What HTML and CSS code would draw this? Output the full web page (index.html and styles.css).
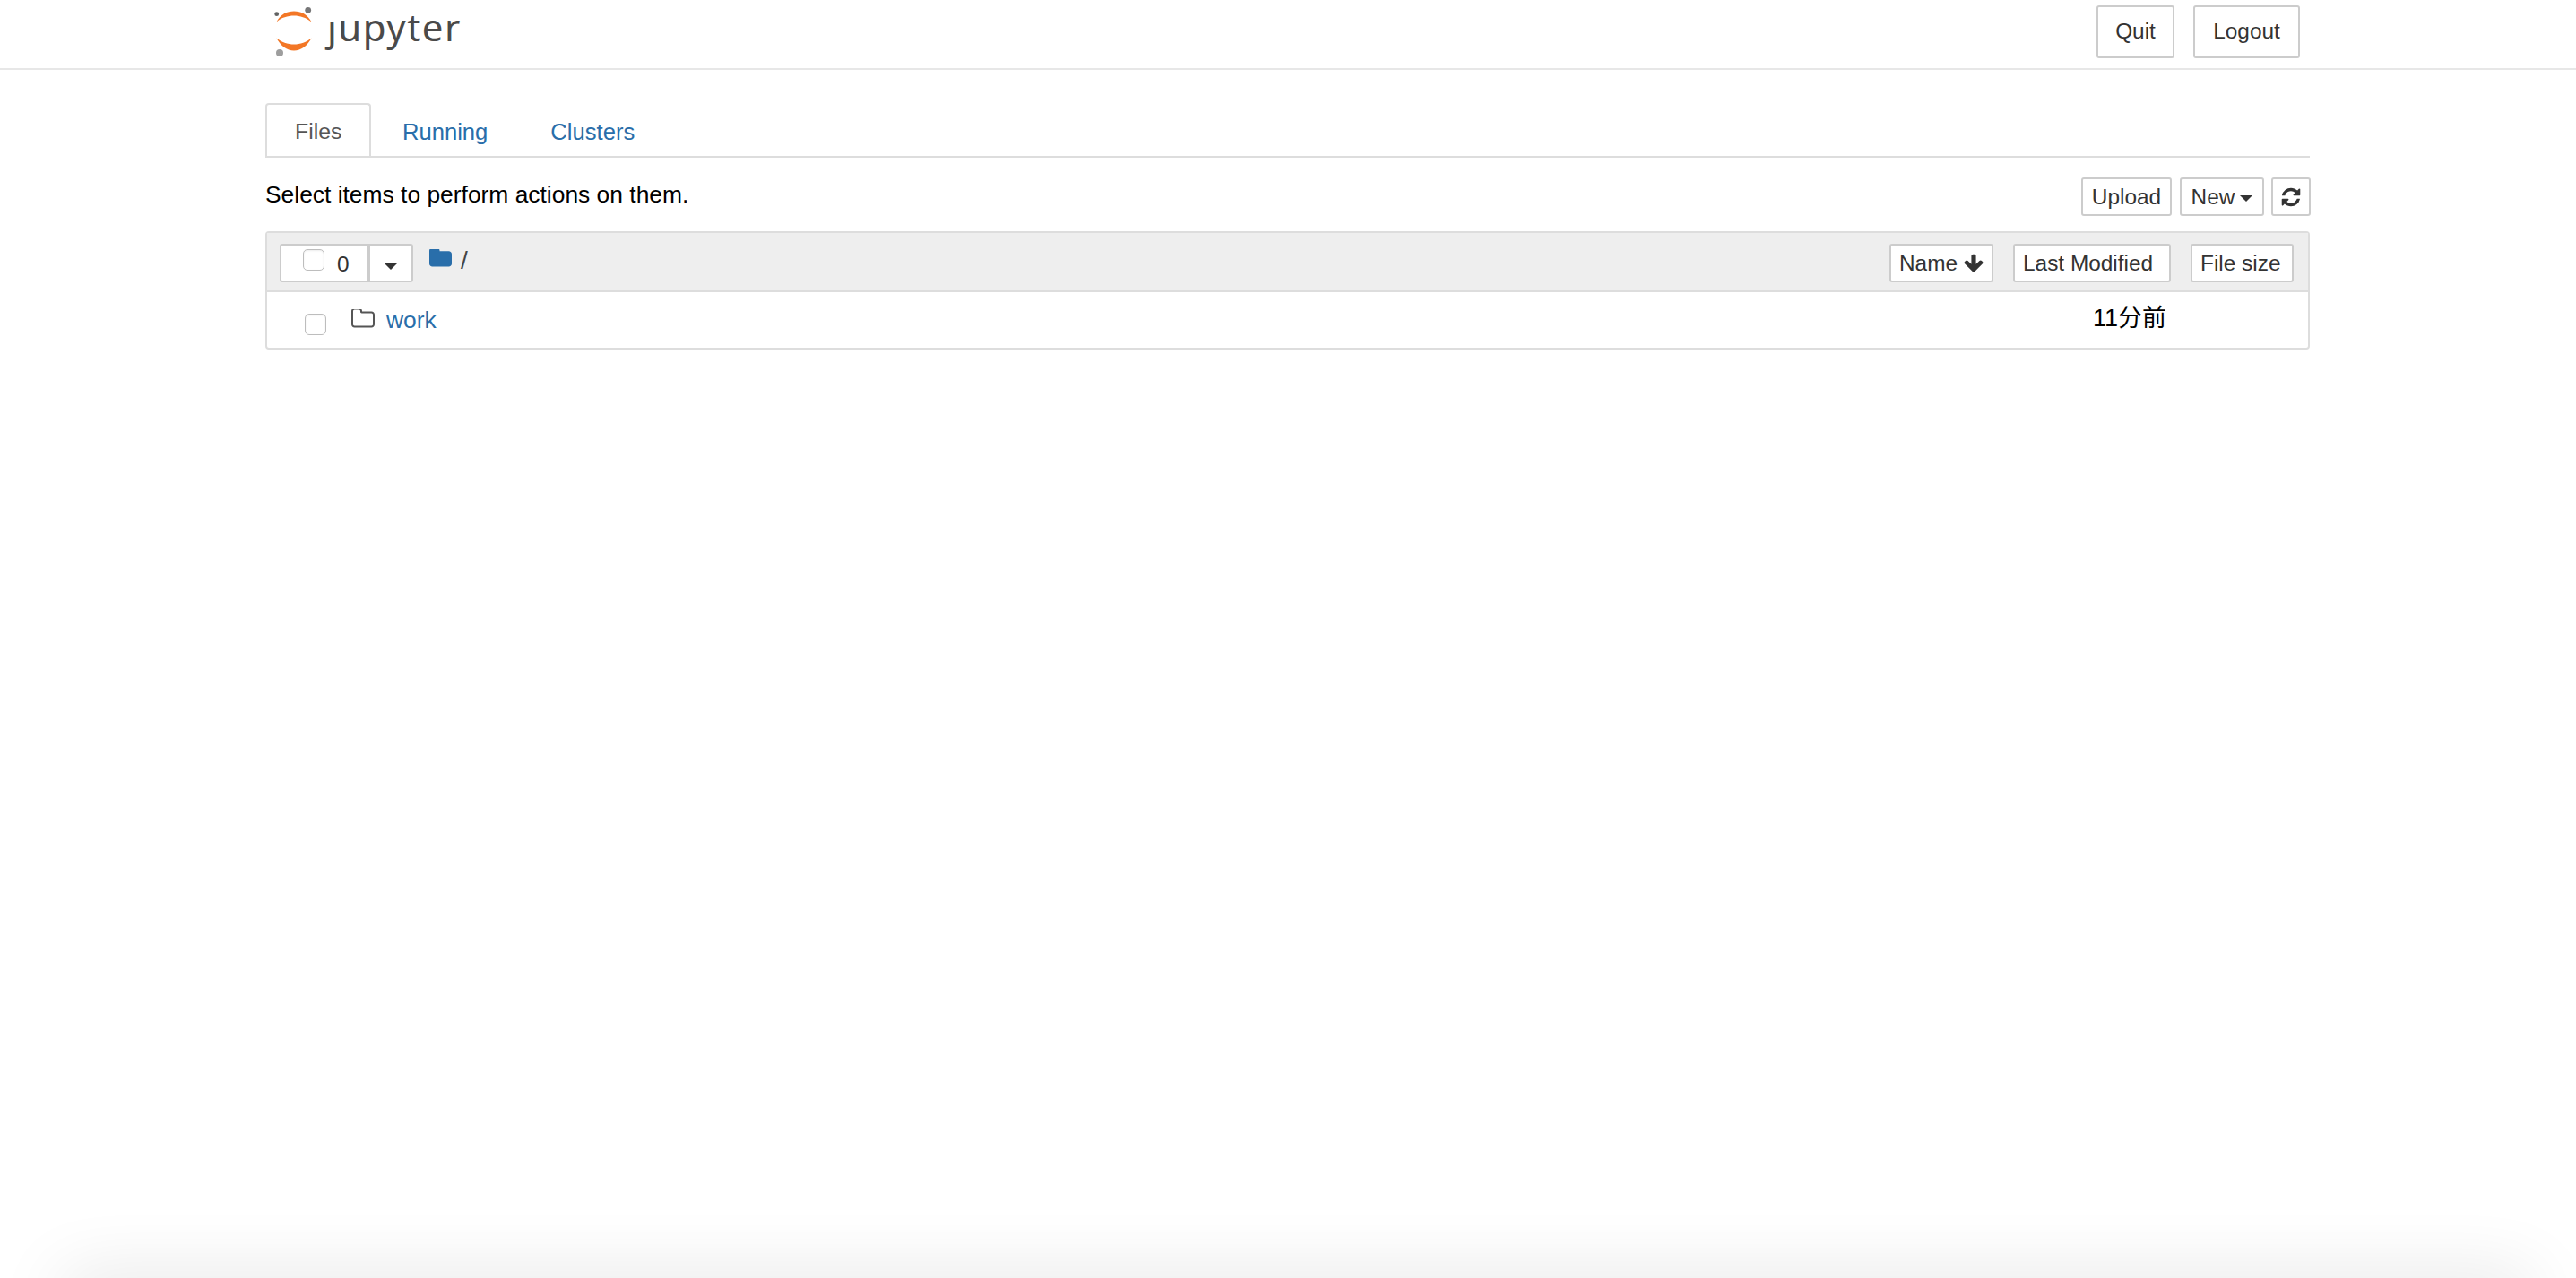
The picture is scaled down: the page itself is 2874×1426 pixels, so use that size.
FILE: index.html
```html
<!DOCTYPE html>
<html lang="en">
<head>
<meta charset="utf-8">
<title>Home</title>
<link rel="stylesheet" href="styles.css">
</head>
<body>
<header class="topbar">
  <div class="logo">
    <svg class="logo-mark" viewBox="0 0 67 70" width="67" height="70" aria-hidden="true">
      <path class="arc" d="M13.500 24.500C18 16 25 12.500 33 12.500C41 12.500 48 16 52.500 24.500C46 19.500 40 17.500 33 17.500C26 17.500 19 19.500 13.500 24.500Z"/>
      <path class="arc" d="M13.500 42.500C19 47 26 49.500 33 49.500C40 49.500 47 47 52.500 42.500C48 51 41 56.500 33 56.500C25 56.500 18 51 13.500 42.500Z"/>
      <circle class="dot-a" cx="48.700" cy="11.300" r="3.400"/>
      <circle class="dot-b" cx="13.700" cy="15.700" r="2.400"/>
      <circle class="dot-c" cx="17" cy="59" r="4"/>
    </svg>
    <span class="logo-text"><span class="logo-j">j</span>upyter</span>
  </div>
  <div class="top-actions">
    <button class="btn btn-quit">Quit</button>
    <button class="btn btn-logout">Logout</button>
  </div>
</header>

<main class="page">
  <nav class="tabs">
    <a class="tab tab-active">Files</a>
    <a class="tab tab-running">Running</a>
    <a class="tab tab-clusters">Clusters</a>
  </nav>

  <div class="actions">
    <p class="hint">Select items to perform actions on them.</p>
    <div class="action-buttons">
      <button class="btn btn-upload">Upload</button>
      <button class="btn btn-new">New<span class="caret caret-small"></span></button>
      <button class="btn btn-refresh" aria-label="Refresh">
        <svg class="fa" viewBox="0 0 1792 1792" width="24" height="24"><path d="M1639 1056q0 5-1 7-64 268-268 434.500t-478 166.500q-146 0-282.500-55t-243.500-157l-129 129q-19 19-45 19t-45-19-19-45v-448q0-26 19-45t45-19h448q26 0 45 19t19 45-19 45l-137 137q71 66 161 102t187 36q134 0 250-65t186-179q11-17 53-117 8-23 30-23h192q13 0 22.500 9.500t9.500 22.500zm25-800v448q0 26-19 45t-45 19h-448q-26 0-45-19t-19-45 19-45l138-138q-148-137-349-137-134 0-250 65t-186 179q-11 17-53 117-8 23-30 23h-199q-13 0-22.500-9.500t-9.500-22.500v-7q65-268 270-434.500t480-166.500q146 0 284 55.500t245 156.500l130-129q19-19 45-19t45 19 19 45z"/></svg>
      </button>
    </div>
  </div>

  <section class="panel">
    <div class="toolbar">
      <div class="select-group">
        <div class="select-count">
          <input class="check check-head" type="checkbox" aria-label="Select all">
          <span class="count">0</span>
        </div>
        <div class="select-menu"><span class="caret"></span></div>
      </div>
      <div class="crumb">
        <svg class="icon-folder" viewBox="64 256 1664 1280" width="25" height="20" aria-hidden="true"><path d="M1728 608v704q0 92-66 158t-158 66h-1216q-92 0-158-66t-66-158v-960q0-92 66-158t158-66h320q92 0 158 66t66 158v32h672q92 0 158 66t66 158z"/></svg>
        <span class="crumb-slash">/</span>
      </div>
      <div class="sort-buttons">
        <button class="btn btn-left btn-name">Name
          <svg class="fa fa-arrow" viewBox="0 0 1792 1792" width="24" height="24"><path d="M1675 832q0 53-37 90l-651 652q-39 37-91 37-53 0-90-37l-651-652q-38-36-38-90 0-53 38-91l74-75q39-37 91-37 53 0 90 37l294 294v-704q0-52 38-90t90-38h128q52 0 90 38t38 90v704l294-294q37-37 90-37 52 0 91 37l75 75q37 39 37 91z"/></svg>
        </button>
        <button class="btn btn-left btn-modified">Last Modified</button>
        <button class="btn btn-left btn-size">File size</button>
      </div>
    </div>
    <div class="row">
      <input class="check check-row" type="checkbox" aria-label="Select work">
      <svg class="icon-folder-o" viewBox="64 256 1664 1280" width="26" height="21" aria-hidden="true"><path d="M1600 1312v-704q0-40-28-68t-68-28h-704q-40 0-68-28t-28-68v-64q0-40-28-68t-68-28h-320q-40 0-68 28t-28 68v960q0 40 28 68t68 28h1216q40 0 68-28t28-68zm128-704v704q0 92-66 158t-158 66h-1216q-92 0-158-66t-66-158v-960q0-92 66-158t158-66h320q92 0 158 66t66 158v32h672q92 0 158 66t66 158z"/></svg>
      <a class="item-link">work</a>
      <span class="item-time">11分前</span>
    </div>
  </section>
</main>
<div class="bottom-shadow"></div>
</body>
</html>
```

FILE: styles.css
```css
* { box-sizing: border-box; }
html, body { margin: 0; padding: 0; height: 100%; overflow: hidden; background: #fff; }
body {
  font-family: "Liberation Sans", "Noto Sans CJK SC", Arial, sans-serif;
  font-size: 24.400px;
  line-height: 34px;
  color: #000;
  position: relative;
}

.btn {
  font: inherit;
  line-height: 1;
  color: #333;
  background: #fff;
  border: 2px solid #ccc;
  border-radius: 3px;
  padding: 0;
  display: flex;
  align-items: center;
  justify-content: center;
}
.btn-left { justify-content: flex-start; padding: 1px 0 0 9px; }

/* header */
.topbar {
  height: 78px;
  border-bottom: 2px solid #e7e7e7;
  padding: 0 308px 0 295px;
  display: flex;
  justify-content: space-between;
}
.logo { display: flex; height: 70px; }
.logo-mark { display: block; flex: none; }
.arc { fill: #f37726; }
.dot-a { fill: #767677; }
.dot-b { fill: #616262; }
.dot-c { fill: #9e9e9e; }
.logo-text {
  font-family: "Noto Sans", sans-serif;
  font-size: 42px;
  line-height: 50px;
  letter-spacing: 1.500px;
  color: #4a4a4a;
  margin: 5px 0 0 3px;
  white-space: nowrap;
}
.logo-j { display: inline-block; clip-path: inset(20px -20px -20px -20px); }
.top-actions { display: flex; gap: 21px; padding-top: 6px; }
.btn-quit { width: 87px; height: 59px; }
.btn-logout { width: 119px; height: 59px; }

/* page */
.page { padding: 39px 297px 0 296px; }

.tabs {
  display: flex;
  height: 59px;
  border-bottom: 2px solid #ddd;
  align-items: flex-end;
  font-size: 25.600px;
}
.tab {
  height: 59px;
  line-height: 60px;
  padding: 0 34px;
  color: #296eaa;
  border: 2px solid transparent;
  border-bottom: 0;
  white-space: nowrap;
}
.tab-active {
  color: #555;
  padding: 0 31px;
  width: 118px;
  background: #fff;
  border-color: #ddd;
  border-radius: 4px 4px 0 0;
  font-size: 24.800px;
}
.tab-running { margin-left: -1px; }
.tab-clusters { margin-left: -2px; }

.actions { display: flex; justify-content: space-between; height: 82px; }
.hint { margin: 24px 0 0; line-height: 34px; color: #000; font-size: 26.400px; }
.action-buttons { display: flex; gap: 9px; padding-top: 22px; margin-right: -1px; }
.btn-upload { width: 101px; height: 43px; padding-top: 1px; }
.btn-new { width: 94px; height: 43px; margin-right: -1px; padding-top: 1px; }
.btn-refresh { width: 44px; height: 43px; }
.fa { display: block; fill: #333; }

.caret {
  display: inline-block;
  width: 0;
  height: 0;
  border-left: 8px solid transparent;
  border-right: 8px solid transparent;
  border-top: 8px solid #333;
}
.caret-small {
  border-left-width: 7px;
  border-right-width: 7px;
  border-top-width: 7px;
  margin-left: 6px;
  margin-top: 3px;
}

/* file list */
.panel {
  border: 2px solid #ddd;
  border-radius: 4px;
  height: 132px;
}
.toolbar {
  height: 66px;
  background: #eee;
  border-bottom: 2px solid #ddd;
  display: flex;
  padding: 12px 16px 0 14px;
}
.select-group { display: flex; height: 43px; }
.select-count {
  width: 100px;
  border: 2px solid #ccc;
  border-radius: 3px 0 0 3px;
  background: #fff;
  display: flex;
  padding: 4px 0 0 24px;
}
.select-menu {
  width: 50px;
  margin-left: -1px;
  border: 2px solid #ccc;
  border-radius: 0 3px 3px 0;
  background: #fff;
  display: flex;
  align-items: center;
  justify-content: center;
  padding-top: 6px;
}
.check {
  appearance: none;
  -webkit-appearance: none;
  margin: 0;
  width: 24px;
  height: 24px;
  flex: none;
  background: #fff;
  border: 1.500px solid #bdbdbd;
  border-radius: 5px;
  box-shadow: inset 0 1px 2px rgba(0, 0, 0, .08);
}
.count { margin-left: 14px; line-height: 34px; color: #333; }
.crumb { display: flex; align-items: flex-start; margin-left: 18px; color: #444; font-size: 28px; }
.icon-folder { fill: #296eaa; display: block; margin-top: 6px; }
.crumb-slash { margin: 2px 0 0 10px; }
.sort-buttons { display: flex; margin-left: auto; gap: 22px; height: 43px; }
.btn-name { width: 116px; height: 43px; gap: 6px; }
.btn-modified { width: 176px; height: 43px; }
.btn-size { width: 115px; height: 43px; }

.row { display: flex; height: 62px; align-items: flex-start; padding-left: 42px; }
.check-row { margin-top: 24px; }
.icon-folder-o { fill: #555; display: block; margin: 19px 0 0 28px; flex: none; }
.item-link { color: #296eaa; margin: 14px 0 0 13px; font-size: 26.400px; }
.item-time { margin: 12px 158px 0 auto; font-size: 27px; }

.bottom-shadow {
  position: absolute;
  left: 70px;
  right: 50px;
  top: 1428px;
  height: 40px;
  box-shadow: 0 0 80px rgba(0, 0, 0, .14);
}
```
